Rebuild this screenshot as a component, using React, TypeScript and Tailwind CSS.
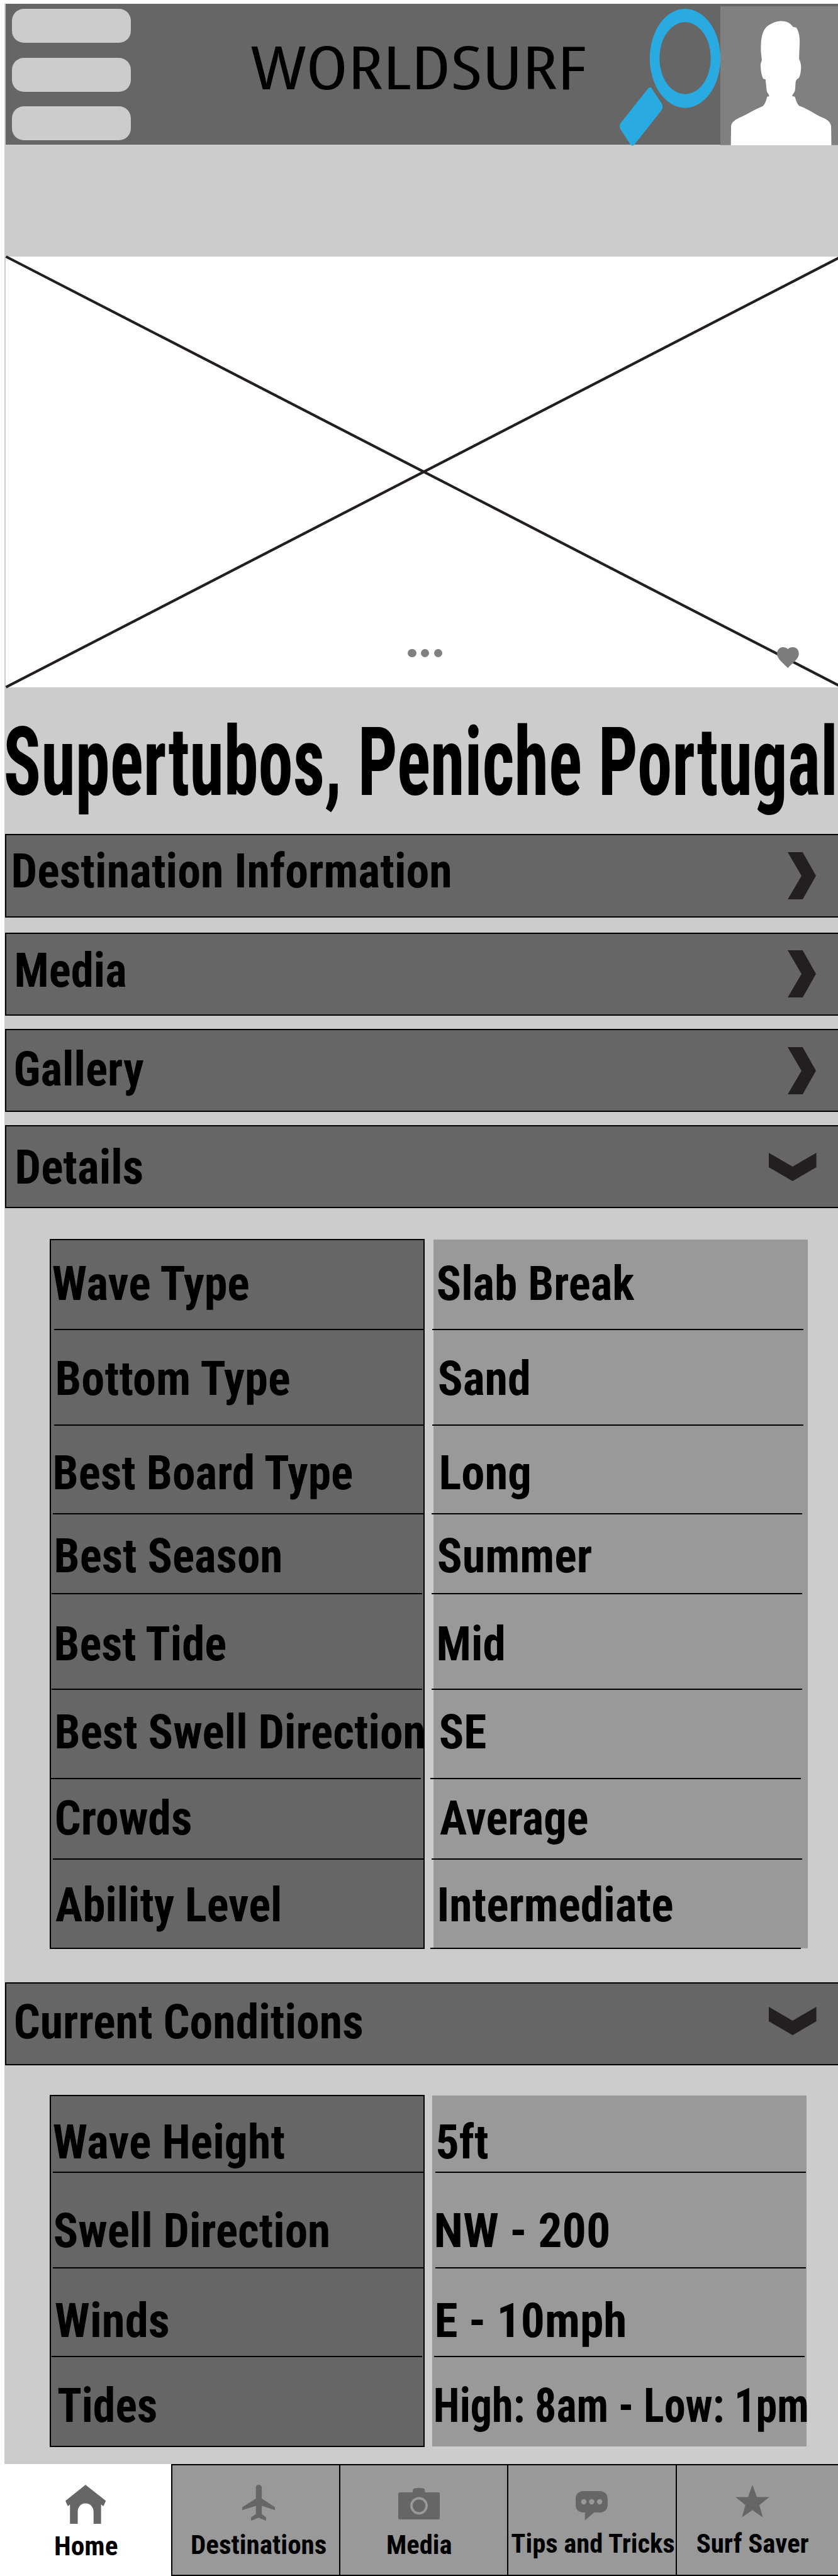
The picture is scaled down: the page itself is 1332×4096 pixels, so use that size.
import { useLayoutEffect, useRef, type ReactNode } from "react";

/* Glyph bounds are measured at a larger size, so that they are not rounded to whole pixels. */
const MEASURE_SCALE = 10;

/* A single line of text whose ink spans exactly the width of its box. */
function FitText({ children, className }: { children: string; className: string }) {
  const box = useRef<HTMLDivElement>(null);
  const line = useRef<HTMLSpanElement>(null);

  useLayoutEffect(() => {
    const outer = box.current;
    const inner = line.current;
    const ctx = document.createElement("canvas").getContext("2d");
    if (!outer || !inner || !ctx) return;
    const style = getComputedStyle(inner);
    ctx.font = `${style.fontWeight} ${parseFloat(style.fontSize) * MEASURE_SCALE}px ${style.fontFamily}`;
    if (style.fontStretch !== "100%") {
      (ctx as unknown as { fontStretch: string }).fontStretch = "condensed";
    }
    const m = ctx.measureText(children);
    const ratio = parseFloat(getComputedStyle(inner).width) / m.width;
    const left = -m.actualBoundingBoxLeft * ratio;
    const right = m.actualBoundingBoxRight * ratio;
    const scale = parseFloat(getComputedStyle(outer).width) / (right - left);
    inner.style.transform = `translateX(${-left * scale}px) scaleX(${scale})`;
  }, [children]);

  return (
    <div ref={box} className={`shrink-0 leading-none whitespace-nowrap ${className}`}>
      <span ref={line} className="inline-block origin-left">
        {children}
      </span>
    </div>
  );
}

function ChevronRight({ className }: { className: string }) {
  return (
    <svg viewBox="0 0 45 75.2" className={`ml-auto mr-[34.8px] h-[75.2px] w-[45px] shrink-0 ${className}`}>
      <path d="M0 0H23.8L45 37.6L23.8 75.2H0L22 37.6Z" fill="#231f20" />
    </svg>
  );
}

function ChevronDown({ className }: { className: string }) {
  return (
    <svg viewBox="0 0 75.6 45" className={`ml-auto mr-[34px] h-[45px] w-[75.6px] shrink-0 ${className}`}>
      <path d="M0 0L37.8 22L75.6 0V23L37.8 45L0 23Z" fill="#231f20" />
    </svg>
  );
}

function Bar({ label, labelClass, className, icon }: { label: string; labelClass: string; className: string; icon: ReactNode }) {
  return (
    <div className={`ml-px flex items-start border-y-2 border-l-2 border-black bg-[#666] ${className}`}>
      <FitText className={labelClass}>{label}</FitText>
      {icon}
    </div>
  );
}

type Cell = { text: string; box: string; label: string; rule?: string };

function Column({ cells, className }: { cells: Cell[]; className: string }) {
  return (
    <div className={`flex shrink-0 flex-col ${className}`}>
      {cells.map((c) => (
        <div key={c.text} className={`flex shrink-0 flex-col justify-between ${c.box}`}>
          <FitText className={c.label}>{c.text}</FitText>
          {c.rule && <div className={`h-[2px] shrink-0 bg-black ${c.rule}`} />}
        </div>
      ))}
    </div>
  );
}

const detailNames: Cell[] = [
  { text: "Wave Type", box: "h-[143px]", label: "ml-[3.1px] mt-[32.1px] w-[310.9px]", rule: "ml-[5px] w-[588px]" },
  { text: "Bottom Type", box: "h-[152px]", label: "ml-[9.9px] mt-[39.8px] w-[368.7px]", rule: "ml-[5px] w-[588px]" },
  { text: "Best Board Type", box: "h-[141px]", label: "ml-[5.6px] mt-[37.6px] w-[472.4px]", rule: "ml-[3px] w-[589px]" },
  { text: "Best Season", box: "h-[127px]", label: "ml-[8.2px] mt-[29.2px] w-[357.6px]", rule: "ml-[1px] w-[589px]" },
  { text: "Best Tide", box: "h-[152px]", label: "ml-[8.2px] mt-[42.3px] w-[269.3px]", rule: "ml-[1px] w-[589px]" },
  { text: "Best Swell Direction", box: "h-[142px]", label: "ml-[9px] mt-[30.1px] w-[583.7px]", rule: "-ml-[1px] w-[589px]" },
  { text: "Crowds", box: "h-[128px]", label: "ml-[8.2px] mt-[25.1px] w-[214.1px]", rule: "ml-[3px] w-[589px]" },
  { text: "Ability Level", box: "h-[140px]", label: "ml-[6.5px] mt-[34.5px] w-[356.8px]" },
];

const detailValues: Cell[] = [
  { text: "Slab Break", box: "h-[144px]", label: "ml-[7.2px] mt-[33.1px] w-[312.6px]", rule: "-ml-[2px] w-[590px]" },
  { text: "Sand", box: "h-[152px]", label: "ml-[9.3px] mt-[39.8px] w-[142.7px]", rule: "-ml-[2px] w-[590px]" },
  { text: "Long", box: "h-[141px]", label: "ml-[11.8px] mt-[37.6px] w-[140.2px]", rule: "-ml-[3px] w-[589px]" },
  { text: "Summer", box: "h-[127px]", label: "ml-[7.6px] mt-[29.2px] w-[242.9px]", rule: "-ml-[3px] w-[589px]" },
  { text: "Mid", box: "h-[152px]", label: "ml-[7.6px] mt-[42.3px] w-[103.6px]", rule: "-ml-[3px] w-[589px]" },
  { text: "SE", box: "h-[142px]", label: "ml-[11.3px] mt-[30.1px] w-[71.8px]", rule: "-ml-[5px] w-[589px]" },
  { text: "Average", box: "h-[128px]", label: "ml-[10.1px] mt-[25.1px] w-[234.5px]", rule: "-ml-[3px] w-[589px]" },
  { text: "Intermediate", box: "h-[142px]", label: "ml-[10.1px] mt-[34.5px] w-[369.6px]", rule: "-ml-[5px] w-[589px]" },
];

const conditionNames: Cell[] = [
  { text: "Wave Height", box: "h-[122px]", label: "ml-[4.4px] mt-[36.4px] w-[367.4px]", rule: "ml-[3px] w-[589px]" },
  { text: "Swell Direction", box: "h-[152px]", label: "ml-[6.1px] mt-[54.9px] w-[435.3px]", rule: "ml-[3px] w-[589px]" },
  { text: "Winds", box: "h-[141px]", label: "ml-[7.3px] mt-[46.4px] w-[179.3px]", rule: "ml-[1px] w-[589px]" },
  { text: "Tides", box: "h-[141px]", label: "ml-[11.2px] mt-[39.7px] w-[156px]" },
];

const conditionValues: Cell[] = [
  { text: "5ft", box: "h-[123px]", label: "ml-[9.3px] mt-[37.4px] w-[80px]", rule: "ml-[5px] w-[589px]" },
  { text: "NW - 200", box: "h-[152px]", label: "ml-[6px] mt-[54.9px] w-[274.6px]", rule: "ml-[5px] w-[589px]" },
  { text: "E - 10mph", box: "h-[141px]", label: "ml-[7.1px] mt-[46.4px] w-[299.5px]", rule: "ml-[3px] w-[589px]" },
  { text: "High: 8am - Low: 1pm", box: "h-[141px]", label: "ml-[4.6px] mt-[39.7px] w-[591.2px]" },
];

function Header() {
  return (
    <header className="ml-[2px] flex h-[224px] items-start bg-[#666]">
      <div className="ml-[10px] mt-[8.3px] flex w-[189px] shrink-0 flex-col gap-[23.3px]">
        <div className="h-[54px] rounded-[19px] bg-[#ccc]" />
        <div className="h-[54px] rounded-[19px] bg-[#ccc]" />
        <div className="h-[54px] rounded-[19px] bg-[#ccc]" />
      </div>
      <FitText className="ml-[190.8px] mt-[53px] w-[531px] font-['Open_Sans',sans-serif] text-[94.4px] font-normal">WORLDSURF</FitText>
      <svg viewBox="985 13.5 160.2 217.3" className="ml-[55.2px] mt-[7.5px] h-[217.3px] w-[160.2px] shrink-0 overflow-visible">
        <path
          fillRule="evenodd"
          fill="#29abe2"
          d="M1089 13.5A56.2 78.7 0 0 1 1089 170.9A56.2 78.7 0 0 1 1089 13.5ZM1089 34.8A40.8 57.2 0 0 0 1089 149.2A40.8 57.2 0 0 0 1089 34.8Z"
        />
        <path
          fill="#29abe2"
          d="M1030.3 140C1031.5 138 1034.5 138 1035.8 140L1051.6 163.8C1053.7 167.3 1053.7 171.2 1051.6 174.7L1007.6 230.3C1006.4 231.4 1004 231.4 1002.6 230L986.7 205.8C984.5 202.3 984.5 198.5 986.7 195Z"
        />
      </svg>
      <svg viewBox="1130 35 438 819" preserveAspectRatio="none" className="mt-[3.5px] h-[221.8px] w-[187.2px] shrink-0">
        <path d="M1130 35H1568V850H1130Z" fill="#808080" />
        <path
          fill="#fff"
          d="M1358 122C1375 122 1391 133 1400 156L1412 160C1422 180 1426 215 1425 255C1424 290 1423 320 1423 345C1428 360 1431 380 1430 400C1429 425 1426 450 1421 457C1414 463 1411 470 1410 480L1408 525C1406 545 1399 548 1397 562L1407 566C1411 585 1416 612 1424 620C1450 633 1480 665 1503 684C1525 697 1540 712 1542 740L1543 854H1169L1170 740C1171 712 1188 698 1211 682C1235 663 1262 637 1288 621C1296 611 1300 590 1304 567L1312 562C1310 548 1303 545 1302 525L1298 464L1290 461C1283 445 1279 405 1280 372C1283 360 1285 350 1284 345C1281 310 1280 290 1281 260C1282 210 1290 165 1309 147C1325 132 1340 122 1358 122Z"
        />
      </svg>
    </header>
  );
}

function Hero() {
  return (
    <section className="relative ml-[2px] mt-[178px] h-[685px] bg-white">
      <svg viewBox="0 0 1323 685" className="h-[685px] w-[1323px] overflow-visible">
        <path d="M0.5 0L1330 685M0.5 684.7L1330 -1" stroke="#231f20" strokeWidth="4.2" />
      </svg>
      <div className="absolute left-[639.4px] top-[623.6px] flex gap-[7.2px]">
        <div className="size-[13.4px] rounded-full bg-[#808080]" />
        <div className="size-[13.4px] rounded-full bg-[#808080]" />
        <div className="size-[13.4px] rounded-full bg-[#808080]" />
      </div>
      <svg viewBox="55 51 167 159" className="absolute left-[1226.3px] top-[620.5px] h-[33.1px] w-[34.8px]">
        <path
          d="M138 67C148 55 162 51 176 51C203 51 222 73 222 100C222 140 180 165 138 210C98 168 55 140 55 100C55 73 75 51 101 51C115 51 129 55 138 67Z"
          fill="#7d7d7d"
        />
      </svg>
    </section>
  );
}

function Tab({ label, labelClass, className, children }: { label: string; labelClass: string; className: string; children: ReactNode }) {
  return (
    <div className={`flex h-[178px] shrink-0 flex-col items-start ${className}`}>
      {children}
      <FitText className={`text-[43.2px] ${labelClass}`}>{label}</FitText>
    </div>
  );
}

function TabBar() {
  return (
    <nav className="flex h-[178px] w-[1332px] overflow-hidden">
      <Tab label="Home" labelClass="ml-[87.8px] mt-[13.5px] w-[98.4px]" className="w-[272px] bg-white">
        <svg viewBox="245 1016 151 238" preserveAspectRatio="none" className="ml-[104.4px] mt-[32.9px] h-[62.6px] w-[64.3px]">
          <path fill="#666" d="M320 1016L396 1113L387 1145L378 1135V1254H350V1180C350 1150 338 1128 320 1128C302 1128 291 1150 291 1180V1254H262V1135L254 1145L245 1113Z" />
        </svg>
      </Tab>
      <Tab label="Destinations" labelClass="ml-[31.1px] mt-[17.2px] w-[213px]" className="w-[267px] border-y-2 border-l-2 border-black bg-[#999]">
        <svg viewBox="903 1016 123 217" preserveAspectRatio="none" className="ml-[110.8px] mt-[30.9px] h-[57.1px] w-[52.4px]">
          <path fill="#666" d="M965 1016C971 1016 976 1023 976 1033V1099L1026 1152V1169L976 1143V1193L992 1213V1233L964 1215L936 1233V1213L954 1193V1143L903 1169V1152L954 1099V1033C954 1023 958 1016 965 1016Z" />
        </svg>
      </Tab>
      <Tab label="Media" labelClass="ml-[74.7px] mt-[18.8px] w-[101.8px]" className="w-[267px] border-y-2 border-l-2 border-black bg-[#999]">
        <svg viewBox="43 50 317 240" preserveAspectRatio="none" className="ml-[92.2px] mt-[36.4px] h-[50px] w-[66.3px]">
          <path fill="#666" d="M55 83H152L156 61C157 54 178 50 200 50C222 50 243 54 244 61L247 83H348Q360 83 360 95V278Q360 290 348 290H55Q43 290 43 278V95Q43 83 55 83Z" />
          <circle cx="201" cy="186" r="57.5" fill="none" stroke="#999" strokeWidth="18" />
        </svg>
      </Tab>
      <Tab label="Tips and Tricks" labelClass="ml-[5.2px] mt-[15.3px] w-[258.3px]" className="w-[268px] border-y-2 border-l-2 border-black bg-[#999]">
        <svg viewBox="77 74 241 222" preserveAspectRatio="none" className="ml-[106.9px] mt-[41.4px] h-[46.6px] w-[50.8px]">
          <path fill="#666" d="M135 74H260C294 74 318 98 318 130V180C318 212 294 236 260 236H216L147 296V236H135C101 236 77 212 77 180V130C77 98 101 74 135 74Z" />
          <circle cx="138" cy="155" r="20" fill="#999" />
          <circle cx="198" cy="155" r="20" fill="#999" />
          <circle cx="258" cy="155" r="20" fill="#999" />
        </svg>
      </Tab>
      <Tab label="Surf Saver" labelClass="ml-[32px] mt-[20.1px] w-[177px]" className="w-[268px] border-y-2 border-l-2 border-black bg-[#999]">
        <svg viewBox="1187 1018 126 197" preserveAspectRatio="none" className="ml-[93.1px] mt-[31.4px] h-[51.8px] w-[53.8px]">
          <path fill="#666" d="M1250 1018L1267 1092H1313L1276 1141L1289 1215L1250 1171L1211 1215L1224 1141L1187 1092H1234Z" />
        </svg>
      </Tab>
    </nav>
  );
}

export default function App() {
  return (
    <div className="flex h-[4096px] w-[1332px] flex-col overflow-hidden bg-white pt-[6px] font-['Roboto_Condensed',Roboto,sans-serif] text-[75.6px] font-bold text-black font-stretch-condensed">
      <main className="ml-[7px] flex h-[3912px] shrink-0 flex-col bg-[#ccc]">
        <Header />
        <Hero />
        <h1 className="flex h-[233px] shrink-0 items-start">
          <FitText className="ml-[2.3px] mt-[44px] w-[1317.6px] text-[151.8px]">Supertubos, Peniche Portugal</FitText>
        </h1>
        <Bar label="Destination Information" labelClass="ml-[11.2px] mt-[20.1px] w-[694.9px]" className="h-[133px]" icon={<ChevronRight className="mt-[26.8px]" />} />
        <Bar label="Media" labelClass="ml-[16.3px] mt-[21.2px] w-[174.2px]" className="mt-[24px] h-[132px]" icon={<ChevronRight className="mt-[26.3px]" />} />
        <Bar label="Gallery" labelClass="ml-[14.6px] mt-[25.2px] w-[203.1px]" className="mt-[21px] h-[132px]" icon={<ChevronRight className="mt-[26.7px]" />} />
        <Bar label="Details" labelClass="ml-[17.2px] mt-[27.5px] w-[198.8px]" className="mt-[21px] h-[132px]" icon={<ChevronDown className="mt-[41.7px]" />} />
        <section className="ml-[72px] mt-[49px] flex h-[1129px] shrink-0 items-start">
          <Column cells={detailNames} className="h-[1129px] w-[596px] border-2 border-black bg-[#666]" />
          <Column cells={detailValues} className="ml-[14px] mt-[1px] h-[1127px] w-[594.6px] bg-[#999]" />
        </section>
        <Bar label="Current Conditions" labelClass="ml-[13.8px] mt-[23.9px] w-[551.3px]" className="mt-[53px] h-[132px]" icon={<ChevronDown className="mt-[36.9px]" />} />
        <section className="ml-[72px] mt-[47px] flex h-[560px] shrink-0 items-start">
          <Column cells={conditionNames} className="h-[560px] w-[596px] border-2 border-black bg-[#666]" />
          <Column cells={conditionValues} className="ml-[12px] mt-[1px] h-[558px] w-[595px] bg-[#999]" />
        </section>
      </main>
      <TabBar />
    </div>
  );
}
